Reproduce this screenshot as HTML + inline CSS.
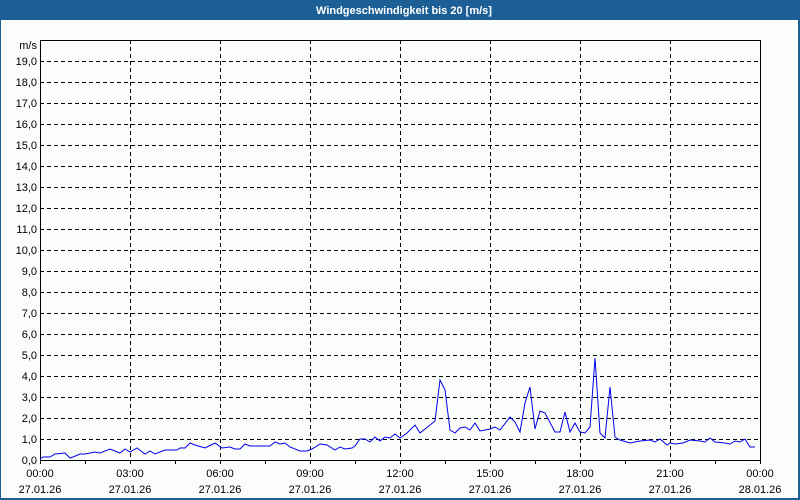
<!DOCTYPE html>
<html><head><style>
body{margin:0;width:800px;height:500px;overflow:hidden;background:#fbfdfb;}
svg{display:block}
text{font-family:"Liberation Sans","DejaVu Sans",sans-serif;font-size:11px;fill:#000}
</style></head><body>
<svg width="800" height="500" xmlns="http://www.w3.org/2000/svg">
<rect x="0" y="0" width="800" height="500" fill="#1c5f96"/>
<rect x="1" y="20" width="797" height="478" fill="#fbfdfb"/>
<text x="404" y="14" text-anchor="middle" style="fill:#fff;font-weight:bold;font-size:11px">Windgeschwindigkeit bis 20 [m/s]</text>
<g stroke="#000" stroke-width="1" stroke-dasharray="4,3" fill="none">
<path d="M40 61.5H760M40 82.5H760M40 103.5H760M40 124.5H760M40 145.5H760M40 166.5H760M40 187.5H760M40 208.5H760M40 229.5H760M40 250.5H760M40 271.5H760M40 292.5H760M40 313.5H760M40 334.5H760M40 355.5H760M40 376.5H760M40 397.5H760M40 418.5H760M40 439.5H760"/>
<path d="M130.5 40V460M220.5 40V460M310.5 40V460M400.5 40V460M490.5 40V460M580.5 40V460M670.5 40V460"/>
</g>
<rect x="40.5" y="40.5" width="720" height="420" fill="none" stroke="#000" stroke-width="1"/>
<g stroke="#000"><path d="M40.5 460v4M85.5 460v4M130.5 460v4M175.5 460v4M220.5 460v4M265.5 460v4M310.5 460v4M355.5 460v4M400.5 460v4M445.5 460v4M490.5 460v4M535.5 460v4M580.5 460v4M625.5 460v4M670.5 460v4M715.5 460v4M760.5 460v4"/></g>
<polyline fill="none" stroke="#0000ee" stroke-width="1" points="40,459 43,457 50,457 55,454 65,453 70,458 73,457 80,454 85,454 95,452 100,453 110,449 120,453 125,449 130,452 137,448 145,454 150,451 155,454 165,450 177,450 180,448 185,448 190,443 195,445 205,448 215,443 222,448 230,447 235,449 240,449 245,444 250,446 270,446 275,442 280,444 285,443 290,447 300,451 307,451 312,449 320,444 327,445 335,450 340,447 345,449 352,448 355,446 360,439 365,439 370,442 375,437 380,441 385,437 390,438 395,434 400,438 407,433 415,425 420,433 430,425 435,421 440,380 445,390 450,430 455,433 460,428 465,427 470,430 475,423 480,431 490,429 495,427 500,430 510,417 515,422 520,432 525,403 530,387 535,429 540,411 545,413 555,432 560,432 565,412 570,432 575,423 580,432 585,433 590,427 595,358 600,433 605,438 610,387 615,437 620,440 630,443 640,441 650,440 655,442 660,439 667,445 670,443 675,444 683,443 690,440 700,441 705,442 710,438 715,442 725,443 730,444 735,441 740,442 745,439 750,447 755,447"/>
<g text-anchor="end">
<text x="37" y="49">m/s</text>
<text x="37" y="65">19,0</text><text x="37" y="86">18,0</text><text x="37" y="107">17,0</text><text x="37" y="128">16,0</text><text x="37" y="149">15,0</text><text x="37" y="170">14,0</text><text x="37" y="191">13,0</text><text x="37" y="212">12,0</text><text x="37" y="233">11,0</text><text x="37" y="254">10,0</text><text x="37" y="275">9,0</text><text x="37" y="296">8,0</text><text x="37" y="317">7,0</text><text x="37" y="338">6,0</text><text x="37" y="359">5,0</text><text x="37" y="380">4,0</text><text x="37" y="401">3,0</text><text x="37" y="422">2,0</text><text x="37" y="443">1,0</text><text x="37" y="464">0,0</text>
</g>
<g text-anchor="middle">
<text x="40" y="477">00:00</text><text x="130" y="477">03:00</text><text x="220" y="477">06:00</text><text x="310" y="477">09:00</text><text x="400" y="477">12:00</text><text x="490" y="477">15:00</text><text x="580" y="477">18:00</text><text x="670" y="477">21:00</text><text x="760" y="477">00:00</text>
<text x="40" y="493">27.01.26</text><text x="130" y="493">27.01.26</text><text x="220" y="493">27.01.26</text><text x="310" y="493">27.01.26</text><text x="400" y="493">27.01.26</text><text x="490" y="493">27.01.26</text><text x="580" y="493">27.01.26</text><text x="670" y="493">27.01.26</text><text x="760" y="493">28.01.26</text>
</g>
</svg>
</body></html>
